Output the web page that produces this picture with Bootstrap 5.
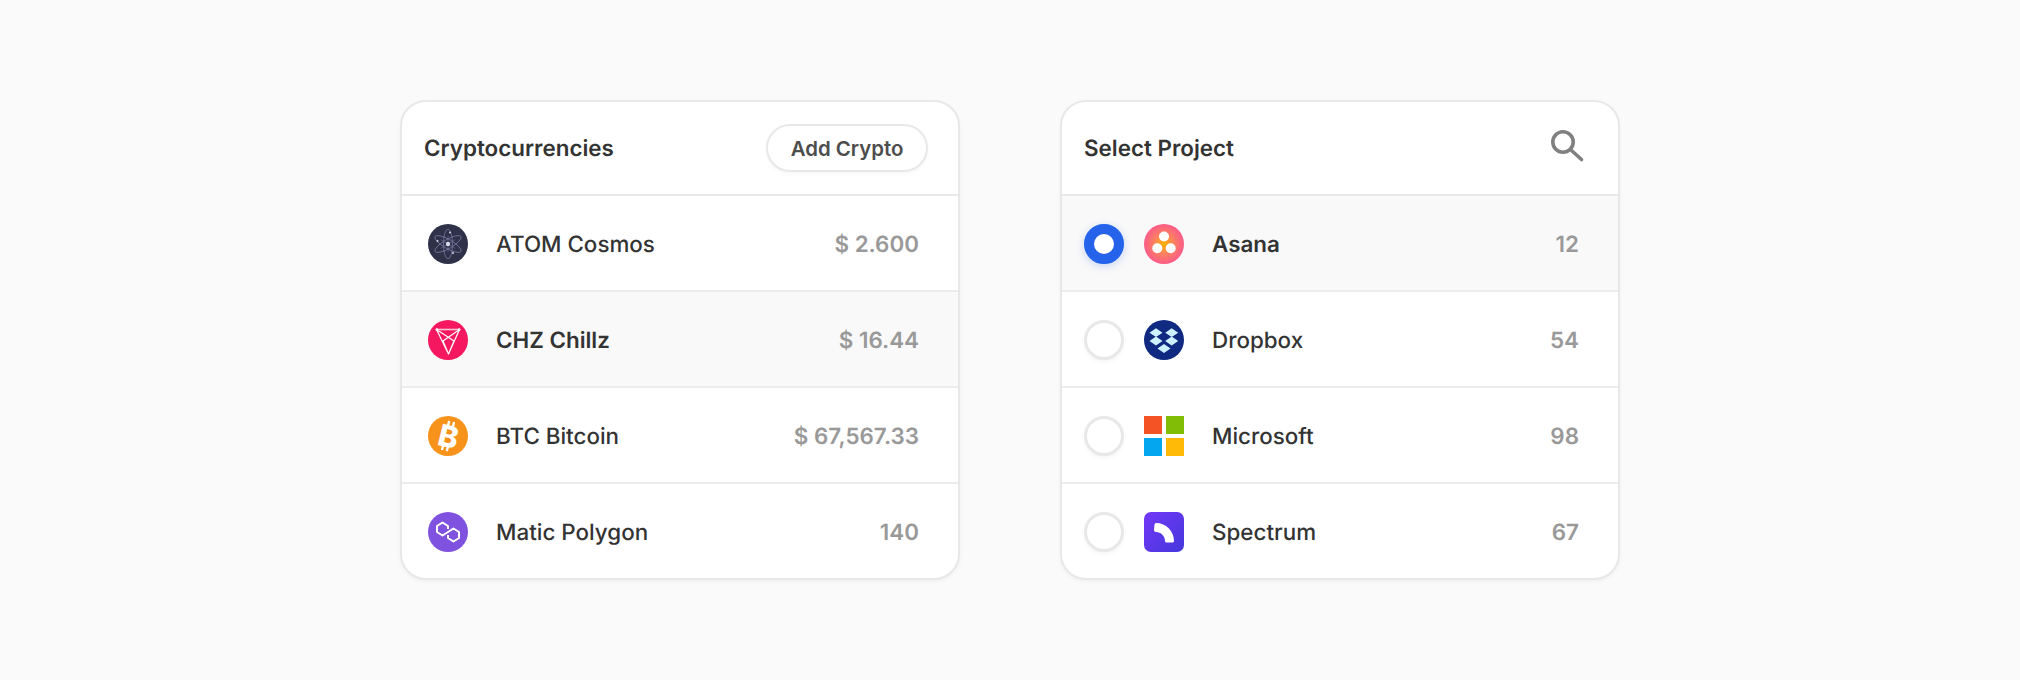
<!DOCTYPE html>
<html lang="en">
<head>
<meta charset="utf-8">
<title>Lists</title>
<link href="https://cdn.jsdelivr.net/npm/bootstrap@5.3.0/dist/css/bootstrap.min.css" rel="stylesheet">
<style>
html,body{height:100%}
body{background:#fafafa;font-family:Inter,"Liberation Sans",sans-serif;color:#333;padding-top:100px;gap:100px;text-rendering:geometricPrecision}
.pane{width:560px;height:480px;background:#fff;border:2px solid #e8e8e8;border-radius:26px;box-shadow:0 2px 4px rgba(0,0,0,.04);overflow:hidden}
.pane-head{height:94px;padding:0 30px 0 22px;border-bottom:2px solid #e8e8e8}
.pane-head.searchable{padding-right:32px}
.pane-title{font-size:22.4px;font-weight:600;line-height:1;margin:3px 0 0;color:#333}
.pill{height:48px;width:162px;border:2px solid #e8e8e8;border-radius:24px;background:#fff;font-size:20.4px;font-weight:600;color:#4d4d4d;padding:2px 0 0;box-shadow:0 2px 4px rgba(0,0,0,.03)}
.line{height:96px;padding:2px 39px 0 26px;border-bottom:2px solid #ececec}
.line:last-child{border-bottom:0;padding-top:0}
.line.shade{background:#f9f9f9}
.line-name{font-size:22.4px;font-weight:500;color:#333;margin:1px 0 0 28px}
.line.shade .line-name.heavy{font-weight:600}
.line-val{font-size:22.4px;font-weight:600;color:#999;margin:1px 0 0 auto}
.tick{width:40px;height:40px;border-radius:50%;border:3px solid #e8e8e8;background:#fff;box-shadow:0 2px 4px rgba(0,0,0,.04);margin-right:20px}
.tick.on{border:10px solid #2563eb;box-shadow:0 2px 8px rgba(37,99,235,.25)}
.logo{width:40px;height:40px;display:block;flex:none}
.line.proj{padding-left:22px}
</style>
</head>
<body class="d-flex justify-content-center align-items-start">
<section class="pane">
  <div class="pane-head d-flex align-items-center justify-content-between">
    <h2 class="pane-title">Cryptocurrencies</h2>
    <button type="button" class="btn pill">Add Crypto</button>
  </div>
  <div class="line d-flex align-items-center">
    <svg class="logo" viewBox="0 0 40 40"><circle cx="20" cy="20" r="20" fill="#2e3148"/><g fill="none" stroke="#7f83aa" stroke-width=".7"><ellipse cx="20" cy="20" rx="4.500" ry="15"/><ellipse cx="20" cy="20" rx="4.500" ry="15" transform="rotate(60 20 20)"/><ellipse cx="20" cy="20" rx="4.500" ry="15" transform="rotate(-60 20 20)"/></g><path d="M20 11.500V28.500M12.600 15.700L27.400 24.300M27.400 15.700L12.600 24.300" stroke="#6c7099" stroke-width=".6"/><circle cx="20" cy="20" r="2.200" fill="#d5d7ea"/><circle cx="9.500" cy="17" r="1" fill="#d5d7ea"/><circle cx="25" cy="29" r="1" fill="#d5d7ea"/><circle cx="22" cy="8.500" r="1" fill="#d5d7ea"/></svg>
    <span class="line-name">ATOM Cosmos</span><span class="line-val">$ 2.600</span>
  </div>
  <div class="line shade d-flex align-items-center">
    <svg class="logo" viewBox="0 0 40 40"><circle cx="20" cy="20" r="20" fill="#f5175f"/><path d="M8.500 9.500L20.500 34 31.500 9.500M8.500 9.500L26 21 20.500 34 15 21 31.500 9.500" fill="none" stroke="#fff" stroke-width="1.200" stroke-linejoin="round"/><path d="M8.500 9.500H31.500" stroke="#fcc3d6" stroke-width="1.600"/><circle cx="8.800" cy="9.500" r="1.300" fill="#fff"/><circle cx="31.200" cy="9.500" r="1.300" fill="#fff"/></svg>
    <span class="line-name heavy">CHZ Chillz</span><span class="line-val">$ 16.44</span>
  </div>
  <div class="line d-flex align-items-center">
    <svg class="logo" viewBox="0 0 40 40"><circle cx="20" cy="20" r="20" fill="#f7931a"/><g transform="rotate(14 20 20)"><text x="20.500" y="31" text-anchor="middle" font-family="Inter,sans-serif" font-size="30" font-weight="800" fill="#fff">B</text><path d="M17.500 5v5M22.500 5v5M17.500 30v5M22.500 30v5" stroke="#fff" stroke-width="2.400"/></g></svg>
    <span class="line-name">BTC Bitcoin</span><span class="line-val">$ 67,567.33</span>
  </div>
  <div class="line d-flex align-items-center">
    <svg class="logo" viewBox="0 0 40 40"><circle cx="20" cy="20" r="20" fill="#8052e0"/><path d="M20 17V14L14.500 10.500 9 14V20L14.500 23.500 25.500 16.500 31 20V26L25.500 29.500 20 26V23" fill="none" stroke="#fff" stroke-width="2" stroke-linejoin="round"/></svg>
    <span class="line-name">Matic Polygon</span><span class="line-val">140</span>
  </div>
</section>
<section class="pane">
  <div class="pane-head searchable d-flex align-items-center justify-content-between">
    <h2 class="pane-title">Select Project</h2>
    <svg width="36" height="36" viewBox="0 0 36 36" fill="none" stroke="#808080" stroke-width="3.600" stroke-linecap="round"><circle cx="13" cy="12" r="10.200"/><path d="M21 20l10.500 9.500"/></svg>
  </div>
  <div class="line proj shade d-flex align-items-center">
    <span class="tick on"></span>
    <svg class="logo" viewBox="0 0 40 40"><defs><radialGradient id="asa"><stop offset="0" stop-color="#ffb400"/><stop offset=".5" stop-color="#fc8060"/><stop offset="1" stop-color="#fc5c88"/></radialGradient></defs><circle cx="20" cy="20" r="20" fill="url(#asa)"/><circle cx="20" cy="12.500" r="5" fill="#fff"/><circle cx="13.300" cy="24.300" r="5" fill="#fff"/><circle cx="26.700" cy="24.300" r="5" fill="#fff"/></svg>
    <span class="line-name heavy">Asana</span><span class="line-val">12</span>
  </div>
  <div class="line proj d-flex align-items-center">
    <span class="tick"></span>
    <svg class="logo" viewBox="0 0 40 40"><circle cx="20" cy="20" r="20" fill="#0f2a80"/><path d="M12 8.300l6.500 4.400-6.500 4.400-6.500-4.400ZM27.700 8.300l6.500 4.400-6.500 4.400-6.500-4.400ZM12 16.600l6.500 4.400-6.500 4.400-6.500-4.400ZM27.700 16.600l6.500 4.400-6.500 4.400-6.500-4.400ZM20 24.100l6.500 4.400-6.500 4.400-6.500-4.400Z" fill="#cdf1ff"/></svg>
    <span class="line-name">Dropbox</span><span class="line-val">54</span>
  </div>
  <div class="line proj d-flex align-items-center">
    <span class="tick"></span>
    <svg class="logo" viewBox="0 0 40 40"><rect width="18" height="18" fill="#f35325"/><rect x="22" width="18" height="18" fill="#81bc06"/><rect y="22" width="18" height="18" fill="#05a6f0"/><rect x="22" y="22" width="18" height="18" fill="#ffba08"/></svg>
    <span class="line-name">Microsoft</span><span class="line-val">98</span>
  </div>
  <div class="line proj d-flex align-items-center">
    <span class="tick"></span>
    <svg class="logo" viewBox="0 0 40 40"><defs><linearGradient id="spe" x1="0" y1="0" x2="1" y2="1"><stop offset="0" stop-color="#7338f8"/><stop offset="1" stop-color="#4537dc"/></linearGradient></defs><rect width="40" height="40" rx="7" fill="url(#spe)"/><path d="M10.500 11.500a1.500 1.500 0 0 1 1.500-1.500c10 0 18 8 18 18a1.500 1.500 0 0 1-1.500 1.500h-6a1.500 1.500 0 0 1-1.500-1.500c0-5-4-9-9-9a2 2 0 0 1-2-2Z" fill="#fff" transform="translate(0 1)"/></svg>
    <span class="line-name">Spectrum</span><span class="line-val">67</span>
  </div>
</section>
</body>
</html>
